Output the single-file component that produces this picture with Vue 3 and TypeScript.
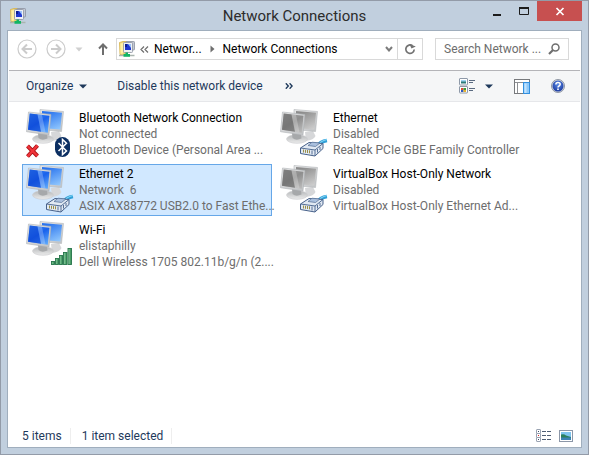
<script setup lang="ts">
import { computed, ref } from 'vue'

type Badge = 'bluetooth' | 'plug' | 'wifi'

interface Connection {
  id: number
  name: string
  status: string
  device: string
  badge: Badge
  enabled: boolean
  offline?: boolean
}

const connections: Connection[] = [
  { id: 1, name: 'Bluetooth Network Connection', status: 'Not connected', device: 'Bluetooth Device (Personal Area ...', badge: 'bluetooth', enabled: true, offline: true },
  { id: 2, name: 'Ethernet', status: 'Disabled', device: 'Realtek PCIe GBE Family Controller', badge: 'plug', enabled: false },
  { id: 3, name: 'Ethernet 2', status: 'Network  6', device: 'ASIX AX88772 USB2.0 to Fast Ethe...', badge: 'plug', enabled: true },
  { id: 4, name: 'VirtualBox Host-Only Network', status: 'Disabled', device: 'VirtualBox Host-Only Ethernet Ad...', badge: 'plug', enabled: false },
  { id: 5, name: 'Wi-Fi', status: 'elistaphilly', device: 'Dell Wireless 1705 802.11b/g/n (2....', badge: 'wifi', enabled: true },
]

const selectedId = ref(3)
const query = ref('')
const selectedCount = computed(() => connections.filter((c) => c.id === selectedId.value).length)
</script>

<template>
  <div class="window">
    <svg class="defs" width="0" height="0" aria-hidden="true">
      <defs>
        <linearGradient id="screen-blue" x1="0.1" y1="0" x2="0.8" y2="1">
          <stop offset="0" stop-color="#3c8cf6" />
          <stop offset="0.5" stop-color="#1a62ec" />
          <stop offset="1" stop-color="#5ba6fb" />
        </linearGradient>
        <linearGradient id="screen-blue-back" x1="0.4" y1="0" x2="0.9" y2="1">
          <stop offset="0" stop-color="#2a74ee" />
          <stop offset="1" stop-color="#94cafe" />
        </linearGradient>
        <linearGradient id="screen-grey" x1="0.1" y1="0" x2="0.8" y2="1">
          <stop offset="0" stop-color="#a2a2a2" />
          <stop offset="0.5" stop-color="#8e8e8e" />
          <stop offset="1" stop-color="#b8b8b8" />
        </linearGradient>
        <linearGradient id="screen-grey-back" x1="0.4" y1="0" x2="0.9" y2="1">
          <stop offset="0" stop-color="#8c8c8c" />
          <stop offset="1" stop-color="#cfcfcf" />
        </linearGradient>
        <linearGradient id="bezel" x1="0" y1="0" x2="1" y2="1">
          <stop offset="0" stop-color="#e6e7e8" />
          <stop offset="1" stop-color="#c0c2c4" />
        </linearGradient>
        <linearGradient id="foot" x1="0" y1="0" x2="0" y2="1">
          <stop offset="0" stop-color="#b4b6b8" />
          <stop offset="1" stop-color="#ececec" />
        </linearGradient>
        <linearGradient id="bar-green" x1="0" y1="0" x2="1" y2="0">
          <stop offset="0" stop-color="#8fd0a4" />
          <stop offset="1" stop-color="#2f8a50" />
        </linearGradient>
        <radialGradient id="help-blue" cx="0.5" cy="0.35" r="0.65">
          <stop offset="0" stop-color="#5d8ce6" />
          <stop offset="1" stop-color="#1a3aa0" />
        </radialGradient>
        <symbol id="folder-net" viewBox="0 0 16 16">
          <path d="M0.500 1.500 L4 0.500 H8 V13 L1 13.500 Z" fill="#f5dc7c" stroke="#d4b04a" stroke-width="0.8" />
          <path d="M1.500 2.500 L4 2 V12.500 L1.500 12.800 Z" fill="#fff0a4" />
          <rect x="7" y="0.500" width="8.500" height="8.500" rx="0.8" fill="#c3c9d4" stroke="#8b92a0" stroke-width="0.8" />
          <rect x="4.500" y="1.500" width="9" height="10" rx="0.8" fill="#eef0f5" stroke="#8b92a0" stroke-width="0.8" />
          <path d="M6 3 H12 V9 H6 Z" fill="#2038d0" />
          <path d="M9 3 H12 V7 Z" fill="#9cc2f8" />
          <path d="M6 3 H8 V6 H6 Z" fill="#0b1d92" />
          <path d="M0 14.500 H15.500" stroke="#a9b4ae" stroke-width="1.500" />
          <path d="M6.500 11.500 H9 V13 H11 V15.800 H4.500 V13 H6.500 Z" fill="#12b564" />
        </symbol>
        <symbol id="stand" viewBox="0 0 52 50">
          <path d="M28 23 L36 22 L38.500 27 Q37 31 29 32 Z" fill="#d6d7d9" />
          <ellipse cx="20" cy="30" rx="10.500" ry="4.300" fill="url(#foot)" stroke="#cacacc" stroke-width="0.6" />
          <path d="M15 24 L24 25.500 L24.500 29.500 Q19 32 15.500 29 Z" fill="#a6a8aa" />
        </symbol>
        <symbol id="rj45" viewBox="0 0 28 20">
          <path d="M17 8.500 Q20 3.500 27 2.500" stroke="#2f9fd8" stroke-width="3.600" fill="none" />
          <path d="M17.500 7.500 Q21 2.800 27 1.500" stroke="#8ad8f6" stroke-width="1.200" fill="none" />
          <path d="M0.500 10 L9 4.500 L23 5.500 V10.500 L15 18 L0.500 15.500 Z" fill="#e1e9f3" stroke="#47618a" stroke-width="1" />
          <path d="M0.500 10 L15 12 L23 5.500 M15 12 V18" stroke="#536d94" stroke-width="1" fill="none" />
          <path d="M8 7.500 L15.500 8.500 L20 5 L12 4.200 Z" fill="#aac0de" stroke="#536d94" stroke-width="0.7" />
          <path d="M3.500 11.500 V14.500 M5.500 11.800 V14.800 M7.500 12 V15 M9.500 12.300 V15.300" stroke="#9b8f48" stroke-width="1" />
          <path d="M12 12.500 V16.500 M17.500 11 V14.500 M20 9 V12" stroke="#47618a" stroke-width="0.9" />
        </symbol>
      </defs>
    </svg>

    <header class="titlebar">
      <svg class="app-icon" width="16" height="16" aria-hidden="true"><use href="#folder-net" /></svg>
      <h1>Network Connections</h1>
      <div class="controls">
        <button type="button" class="control" aria-label="Minimize">
          <svg width="10" height="10"><path d="M1 9 H9" stroke="#1c1c1c" stroke-width="2" /></svg>
        </button>
        <button type="button" class="control" aria-label="Maximize">
          <svg width="10" height="10"><path d="M0.500 1 V8.500 H9.500 V1" stroke="#1c1c1c" fill="none" /><path d="M0 2 H10" stroke="#1c1c1c" stroke-width="2" /></svg>
        </button>
        <button type="button" class="control close" aria-label="Close">
          <svg width="10" height="10"><path d="M1.500 2 L8.500 9 M8.500 2 L1.500 9" stroke="#fff" stroke-width="1.700" /></svg>
        </button>
      </div>
    </header>

    <main class="client">
      <nav class="navbar" aria-label="Navigation">
        <button type="button" class="round" aria-label="Back">
          <svg width="20" height="20" fill="none" stroke="#cbcbcb">
            <circle cx="10" cy="10" r="9" stroke-width="1.200" />
            <path d="M15 10 H6 M10 5.500 L5.500 10 L10 14.500" stroke-width="2" />
          </svg>
        </button>
        <button type="button" class="round" aria-label="Forward">
          <svg width="20" height="20" fill="none" stroke="#cbcbcb">
            <circle cx="10" cy="10" r="9" stroke-width="1.200" />
            <path d="M5 10 H14 M10 5.500 L14.500 10 L10 14.500" stroke-width="2" />
          </svg>
        </button>
        <button type="button" class="recent" aria-label="Recent locations">
          <svg width="8" height="5"><path d="M0.500 0.500 H7.500 L4 4.500 Z" fill="#d0d0d0" /></svg>
        </button>
        <button type="button" class="up" aria-label="Up one level">
          <svg width="10" height="14" fill="none" stroke="#6e6e6e" stroke-width="2"><path d="M5 13 V2.500 M1 6.500 L5 2.500 L9 6.500" /></svg>
        </button>
        <div class="address">
          <svg class="address-icon" width="16" height="16" aria-hidden="true"><use href="#folder-net" /></svg>
          <button type="button" class="chevrons" aria-label="Parent folders">
            <svg width="9" height="7" fill="none" stroke="#6e6e6e" stroke-width="1.200"><path d="M4 0.500 L1 3.500 L4 6.500 M8 0.500 L5 3.500 L8 6.500" /></svg>
          </button>
          <a href="#" class="crumb">Networ...</a>
          <svg class="crumb-arrow" width="5" height="8" aria-hidden="true"><path d="M0.500 0.500 L4.500 4 L0.500 7.500 Z" fill="#6e6e6e" /></svg>
          <a href="#" class="crumb">Network Connections</a>
          <button type="button" class="history" aria-label="Previous locations">
            <svg width="8" height="6" fill="none" stroke="#7c7c7c" stroke-width="2"><path d="M1 1 L4 4.500 L7 1" /></svg>
          </button>
          <button type="button" class="refresh" aria-label="Refresh">
            <svg width="12" height="12" fill="none"><path d="M8.500 2.800 A4.200 4.200 0 1 0 10.200 6.500" stroke="#727272" stroke-width="1.700" /><path d="M6.500 0 V5 H11.300 Z" fill="#727272" transform="rotate(-25 8 3)" /></svg>
          </button>
        </div>
        <label class="search">
          <input v-model="query" type="text" placeholder="Search Network ..." aria-label="Search Network Connections" />
          <svg width="12" height="12" fill="none" stroke="#6e6e6e" aria-hidden="true"><circle cx="7.500" cy="4.500" r="3.500" stroke-width="1.500" /><path d="M5 7 L1 11" stroke-width="2.200" /></svg>
        </label>
      </nav>

      <div class="toolbar" role="toolbar" aria-label="Commands">
        <button type="button" class="command">
          Organize
          <svg width="8" height="5" aria-hidden="true"><path d="M0 0.500 H8 L4 4.500 Z" fill="#1e395b" /></svg>
        </button>
        <button type="button" class="command device">Disable this network device</button>
        <button type="button" class="command more" aria-label="More commands">
          <svg width="8" height="6" fill="none" stroke="#1e395b" stroke-width="1.400"><path d="M0.800 0.300 L3.300 3 L0.800 5.700 M4.600 0.300 L7.100 3 L4.600 5.700" /></svg>
        </button>
        <div class="tools">
          <button type="button" class="view" aria-label="Change your view">
            <svg width="16" height="16">
              <rect x="0.500" y="0.500" width="8" height="6.500" rx="0.500" fill="#fff" stroke="#8e99a8" />
              <rect x="2" y="2" width="5" height="2" fill="#9ed4f2" />
              <rect x="2" y="3.500" width="5" height="2" fill="#2a7a78" />
              <rect x="0.500" y="8.500" width="8" height="6.500" rx="0.500" fill="#fff" stroke="#8e99a8" />
              <rect x="2" y="10" width="2.500" height="2" fill="#d84a36" />
              <rect x="4.500" y="10" width="2.500" height="2" fill="#3c9c3c" />
              <rect x="2" y="12" width="2.500" height="2" fill="#2e58c0" />
              <rect x="4.500" y="12" width="2.500" height="2" fill="#e4b12c" />
              <path d="M10 2.500 H16 M10 4.500 H14 M10 10.500 H16 M10 12.500 H14" stroke="#5a6a80" />
            </svg>
            <svg width="8" height="5"><path d="M0 0.500 H8 L4 4.500 Z" fill="#1e395b" /></svg>
          </button>
          <button type="button" aria-label="Show the preview pane">
            <svg width="16" height="15">
              <rect x="0.500" y="0.500" width="15" height="14" fill="#fff" stroke="#77797c" />
              <path d="M1 3.500 H15 M3.500 4 V14" stroke="#8e9094" />
              <rect x="9.500" y="3.500" width="6" height="11" fill="#8ec9fa" stroke="#3390df" />
              <path d="M10.500 4.500 H12.500 V14 H10.500 Z" fill="#c3e3fd" />
            </svg>
          </button>
          <button type="button" class="help" aria-label="Get help">
            <svg width="14" height="14">
              <circle cx="7" cy="7" r="6.500" fill="#d5dae4" stroke="#77808f" stroke-width="0.800" />
              <circle cx="7" cy="7" r="5.500" fill="url(#help-blue)" />
              <path d="M4.900 5.600 Q4.900 3.500 7 3.500 Q9.200 3.500 9.200 5.300 Q9.200 6.300 8 7 Q7 7.500 7 8.600" fill="none" stroke="#fff" stroke-width="1.500" />
              <rect x="6.200" y="9.500" width="1.600" height="1.500" fill="#fff" />
            </svg>
          </button>
        </div>
      </div>

      <ul class="list">
        <li v-for="c in connections" :key="c.id">
          <button
            type="button"
            class="item"
            :class="{ selected: c.id === selectedId }"
            :aria-pressed="c.id === selectedId"
            @click="selectedId = c.id"
          >
            <svg class="picture" width="52" height="50" viewBox="0 0 52 50" aria-hidden="true">
              <use href="#stand" />
              <path d="M17 0.500 L40.500 2.500 L38.500 22.500 L17 20.500 Z" fill="url(#bezel)" stroke="#b3b7bb" stroke-width="0.600" />
              <path d="M19 2 L39 3.800 L37.300 20.500 L19 19 Z" :fill="c.enabled ? 'url(#screen-blue-back)' : 'url(#screen-grey-back)'" />
              <path d="M5.500 3 L27.900 5.500 L26 26 L3.500 22.700 Z" fill="url(#bezel)" stroke="#aeb2b6" stroke-width="0.600" />
              <path d="M6.700 4.500 L26.500 6.800 L24.800 23.700 L5 20.800 Z" :fill="c.enabled ? 'url(#screen-blue)' : 'url(#screen-grey)'" />
              <path d="M6.700 4.500 L14.500 5.400 L18 22.700 L5 20.800 Z" :fill="c.enabled ? '#0c44d2' : '#686868'" fill-opacity="0.600" />
              <path d="M14.500 5.400 L19 6 L22.500 23.300 L18 22.700 Z" fill="#fff" fill-opacity="0.250" />

              <g v-if="c.offline">
                <path d="M4.500 37 L14.500 47 M14.500 36.500 L4.500 47.500" stroke="#a80f14" stroke-width="4" />
                <path d="M4.500 37 L14.500 47 M14.500 36.500 L4.500 47.500" stroke="#f0343a" stroke-width="2.400" />
              </g>
              <g v-if="c.badge === 'bluetooth'">
                <rect x="32" y="28" width="15" height="20" rx="7.500" fill="#0c2f62" />
                <path d="M35.500 34 L43.500 42 L39.500 45.500 V30.500 L43.500 34.200 L35.500 42" fill="none" stroke="#fff" stroke-width="1.500" />
              </g>
              <use v-else-if="c.badge === 'plug'" href="#rj45" x="23" y="29" width="28" height="20" />
              <g v-else fill="url(#bar-green)" stroke="#26744a" stroke-width="0.900">
                <rect x="28.500" y="40.500" width="3" height="3" />
                <rect x="32.500" y="37.500" width="3" height="6" />
                <rect x="36.500" y="34.500" width="3" height="9" />
                <rect x="40.500" y="31.500" width="3.500" height="12" />
                <rect x="45" y="27.500" width="3.500" height="16" />
              </g>
            </svg>
            <span class="text">
              <span class="name">{{ c.name }}</span>
              <span class="detail">{{ c.status }}</span>
              <span class="detail">{{ c.device }}</span>
            </span>
          </button>
        </li>
      </ul>

      <footer class="status">
        <span class="cell">{{ connections.length }} items</span>
        <span class="cell">{{ selectedCount }} item selected</span>
        <div class="modes">
          <button type="button" aria-label="Details view">
            <svg width="16" height="14">
              <g fill="#fff" stroke="#9aa3b2">
                <rect x="0.500" y="0.500" width="4" height="4" rx="0.500" />
                <rect x="0.500" y="4.500" width="4" height="4" rx="0.500" />
                <rect x="0.500" y="8.500" width="4" height="4" rx="0.500" />
              </g>
              <rect x="2" y="2" width="1" height="1" fill="#3b4c66" />
              <rect x="2" y="6" width="1" height="1" fill="#d81e1e" />
              <rect x="2" y="10" width="1" height="1" fill="#3b4c66" />
              <path d="M6 2.500 H10 M11 2.500 H15 M6 6.500 H10 M11 6.500 H15 M6 10.500 H10 M11 10.500 H15" stroke="#4e5d74" />
            </svg>
          </button>
          <button type="button" aria-label="Large icons view">
            <svg width="14" height="12">
              <rect x="0.500" y="0.500" width="13" height="11" fill="#fff" stroke="#8c97a8" />
              <rect x="2" y="2" width="10" height="8" fill="#7fc4ee" />
              <path d="M2 4.500 Q5 3.500 7 5.500 L12 7 V8 H2 Z" fill="#2b7f5c" />
              <path d="M2 7.500 H12 V10 H2 Z" fill="#3c82b4" />
            </svg>
          </button>
        </div>
      </footer>
    </main>
  </div>
</template>

<style>
body {
  background: #c1cfde;
}
</style>

<style scoped>
.window {
  box-sizing: border-box;
  display: flex;
  flex-direction: column;
  min-height: 100vh;
  padding: 0 6px 6px;
  border: 1px solid #939ba8;
  background: #c1cfde;
  color: #000;
  font: 12px/16px Roboto, 'Open Sans', sans-serif;
}

.defs {
  position: absolute;
}

svg {
  display: block;
  flex: none;
}

button {
  display: flex;
  align-items: center;
  justify-content: center;
  margin: 0;
  padding: 0;
  border: 0;
  background: none;
  color: inherit;
  font: inherit;
  white-space: nowrap;
}

.titlebar {
  display: grid;
  grid-template-columns: 1fr auto 1fr;
  align-items: center;
  height: 29px;
}

.app-icon {
  margin-left: 3px;
}

h1 {
  margin: 0;
  color: #2c2c2c;
  font-size: 15px;
  font-weight: 400;
  line-height: 20px;
}

.controls {
  display: flex;
  align-self: start;
  justify-content: flex-end;
}

.control {
  width: 27px;
  height: 20px;
}

.control.close {
  width: 45px;
  background: #c75050;
}

.client {
  display: flex;
  flex: 1;
  flex-direction: column;
  border: 1px solid #a0aebd;
  background: #fff;
}

.navbar {
  display: flex;
  align-items: center;
  height: 36px;
  padding: 0 12px 0 9px;
}

.round {
  margin-right: 9px;
}

.recent {
  margin-right: 15px;
}

.up {
  margin-right: 8px;
}

.address {
  display: flex;
  flex: 1;
  align-items: center;
  box-sizing: border-box;
  height: 22px;
  margin-right: 12px;
  border: 1px solid #d9d9d9;
}

.address-icon {
  margin: 0 5px 0 2px;
}

.crumb {
  color: #000;
  text-decoration: none;
  white-space: nowrap;
}

.chevrons {
  margin-right: 5px;
}

.crumb-arrow {
  margin: 0 8px;
}

.history {
  width: 16px;
  height: 20px;
  margin-left: auto;
}

.refresh {
  width: 25px;
  height: 20px;
  border-left: 1px solid #d9d9d9;
}

.search {
  display: flex;
  align-items: center;
  box-sizing: border-box;
  width: 134px;
  height: 22px;
  padding: 0 8px;
  border: 1px solid #d9d9d9;
}

.search input {
  flex: 1;
  min-width: 0;
  padding: 0;
  border: 0;
  outline: 0;
  background: none;
  font: inherit;
}

.search input::placeholder {
  color: #6d6d6d;
  opacity: 1;
}

.toolbar {
  display: flex;
  align-items: center;
  height: 30px;
  margin: 3px 1px 0;
  padding: 0 15px 0 17px;
  border-top: 1px solid #b4b4b8;
  border-bottom: 1px solid #e6e7ea;
  background: #f5f6f7;
  color: #1e395b;
}

.command {
  gap: 6px;
}

.device {
  margin-left: 30px;
}

.more {
  margin-left: 22px;
}

.tools {
  display: flex;
  align-items: center;
  gap: 21px;
  margin-left: auto;
}

.view {
  gap: 10px;
}

.list {
  display: grid;
  flex: 1;
  grid-template-columns: repeat(auto-fill, 250px);
  align-content: start;
  gap: 4px;
  margin: 0;
  padding: 6px 14px;
  list-style: none;
}

.item {
  justify-content: flex-start;
  box-sizing: border-box;
  width: 100%;
  height: 52px;
  gap: 4px;
  border: 1px solid transparent;
  text-align: left;
}

.item.selected {
  border-color: #66a7e8;
  background: #d1e8ff;
}

.text {
  display: flex;
  flex-direction: column;
  white-space: pre;
}

.detail {
  color: #6d6d6d;
}

.status {
  display: flex;
  align-items: center;
  height: 22px;
  padding: 0 8px 0 14px;
  color: #1e395b;
}

.cell {
  margin-right: 11px;
  padding-right: 8px;
  border-right: 1px solid #eeeeee;
}

.modes {
  display: flex;
  align-items: center;
  gap: 7px;
  margin-left: auto;
}
</style>
